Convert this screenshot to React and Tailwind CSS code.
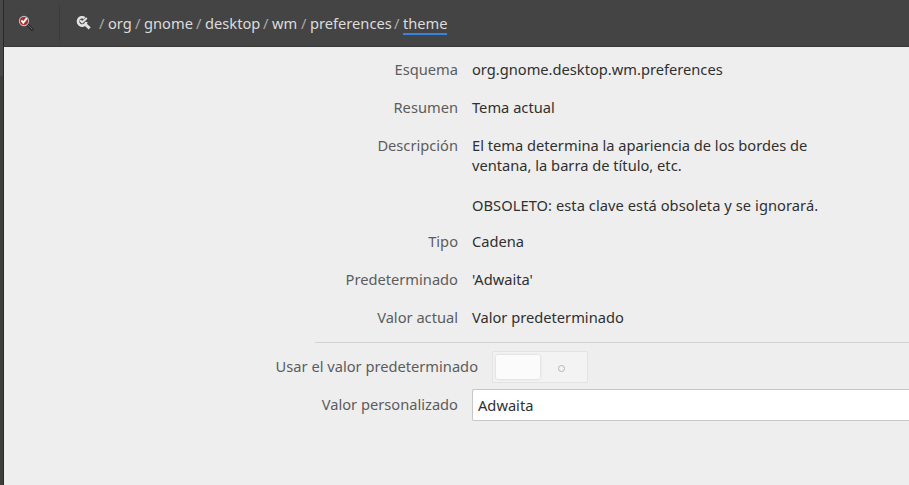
const path = [
  { name: 'org', w: 'w-[24px]' },
  { name: 'gnome', w: 'w-[49px]' },
  { name: 'desktop', w: 'w-[55px]' },
  { name: 'wm', w: 'w-[26px]' },
  { name: 'preferences', w: 'w-[81px]' },
];

function Row({ label, children, className = 'h-[38px]' }) {
  return (
    <div className={`flex ${className}`}>
      <div className="w-[454px] shrink-0 text-right text-[#5c5c5c]">{label}</div>
      <div className="ml-[14px] whitespace-nowrap">{children}</div>
    </div>
  );
}

function AppIcon() {
  return (
    <svg className="ml-[14px] h-[16px] w-[16px] shrink-0" viewBox="0 0 16 16" fill="none">
      <path d="M9.8 10L14.3 14.5" stroke="#262626" strokeWidth="2.6" strokeLinecap="round" />
      <path d="M9.5 9.7L14.4 14.4" stroke="#777" strokeWidth=".9" />
      <circle cx="6" cy="6" r="4.6" fill="#b5262b" stroke="#b9bdb9" strokeWidth="1.1" />
      <path d="M3.4 5.4L5.3 7.7L8.9 3.2" stroke="#fff" strokeWidth="2" />
    </svg>
  );
}

function SearchCheckIcon() {
  return (
    <svg className="ml-[16px] h-[16px] w-[16px] shrink-0" viewBox="0 0 16 16" fill="none">
      <path d="M8.6 3A4.2 4.2 0 1 0 10.3 6.9" stroke="#e2e2e2" strokeWidth="2.6" />
      <path d="M4 5.2L6.2 7.3L10.8 3" stroke="#e2e2e2" strokeWidth="2" />
      <path d="M9 9L13.7 13.3" stroke="#e2e2e2" strokeWidth="3" />
    </svg>
  );
}

export default function App() {
  return (
    <div className="flex h-[485px] w-[909px] overflow-hidden bg-[#eee] font-['Noto_Sans',sans-serif] text-[14.667px] leading-[20px] text-[#303030]">
      <aside className="flex w-[4px] shrink-0 flex-col border-r border-[#292929] bg-[#403e3b]">
        <div className="h-[76px] bg-[#484848]" />
      </aside>
      <main className="min-w-0 flex-1">
        <header className="flex h-[47px] items-center border-b border-[#383838] bg-[#444] text-[#dcdcdc]">
          <AppIcon />
          <div className="ml-[25px] mt-[-1px] h-[36px] w-px bg-[#3b3b3b]" />
          <SearchCheckIcon />
          <nav className="ml-[7px] mt-[2px] flex h-[22px] whitespace-nowrap">
            {path.map((p) => (
              <div key={p.name} className="flex">
                <span className="w-[9px] text-[#aaa]">/</span>
                <span className={`mr-[3px] ${p.w}`}>{p.name}</span>
              </div>
            ))}
            <span className="w-[9px] text-[#aaa]">/</span>
            <span className="h-[22px] w-[44px] border-b-2 border-[#3584e4]">theme</span>
          </nav>
        </header>
        <section className="pt-[12px]">
          <Row label="Esquema">org.gnome.desktop.wm.preferences</Row>
          <Row label="Resumen">Tema actual</Row>
          <Row label="Descripción" className="h-[96px]">
            <p>El tema determina la apariencia de los bordes de</p>
            <p>ventana, la barra de título, etc.</p>
            <p className="mt-[20px] tracking-[0.06px]">OBSOLETO: esta clave está obsoleta y se ignorará.</p>
          </Row>
          <Row label="Tipo">Cadena</Row>
          <Row label="Predeterminado">'Adwaita'</Row>
          <Row label="Valor actual" className="h-[35px]">Valor predeterminado</Row>
          <div className="ml-[311px] h-px bg-[#d3d3d3]" />
          <div className="mt-[8px] flex h-[32px] items-center">
            <span className="mt-[-2px] w-[474px] text-right text-[#5c5c5c]">Usar el valor predeterminado</span>
            <div className="ml-[14px] flex h-[32px] w-[96px] items-center rounded-[2px] border border-[#e3e3e3] bg-[#f3f3f3] p-[3px]">
              <div className="mt-[-1px] h-[24px] w-[44px] rounded-[2px] bg-[#fbfbfb] shadow-[0_0_3px_rgba(0,0,0,0.16)]" />
              <div className="ml-[18px] mt-[2px] h-[7px] w-[7px] rounded-full border border-[#b5b5b5]" />
            </div>
          </div>
          <div className="mt-[6px] flex h-[32px] items-center">
            <span className="mt-[-2px] w-[454px] shrink-0 text-right text-[#5c5c5c]">Valor personalizado</span>
            <div className="ml-[14px] flex h-[32px] flex-1 items-center rounded-l-[2px] border border-r-0 border-[#c7c7c7] bg-white pb-px pl-[5px]">Adwaita</div>
          </div>
        </section>
      </main>
    </div>
  );
}
